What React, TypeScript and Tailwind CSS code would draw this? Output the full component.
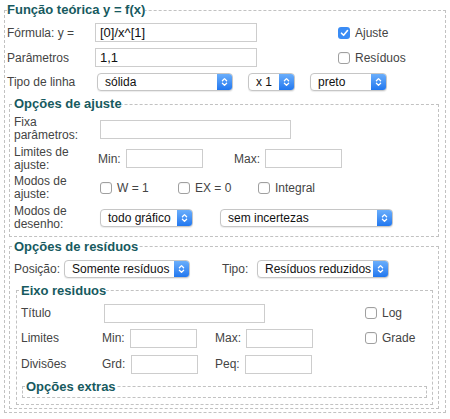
import React from "react";

const Chev = () => (
  <svg width="7" height="10" viewBox="0 0 7 10" fill="none" stroke="white" strokeWidth="1.3" strokeLinecap="round" strokeLinejoin="round">
    <path d="M1.4 3.7 L3.5 1.6 L5.6 3.7" />
    <path d="M1.4 6.3 L3.5 8.4 L5.6 6.3" />
  </svg>
);

function Select({ w, text, className = "" }: { w: string; text: string; className?: string }) {
  return (
    <div className={`${w} ${className} h-[18px] flex items-stretch rounded-[4px] border border-[#c6c6c6] bg-white shadow-[0_1px_1px_rgba(0,0,0,0.08)] overflow-hidden shrink-0`}>
      <div className="flex-1 pl-[7px] text-[12px] leading-[16px] text-[#111] whitespace-nowrap overflow-hidden">{text}</div>
      <div className="w-[15px] flex items-center justify-center bg-gradient-to-b from-[#6aaefb] to-[#2077ef]">
        <Chev />
      </div>
    </div>
  );
}

function Input({ w, value = "", className = "" }: { w: string; value?: string; className?: string }) {
  return (
    <div className={`${w} ${className} h-[19px] border border-[#cdcdcd] bg-white pl-[4px] text-[13px] leading-[17px] text-[#111] shrink-0`}>
      {value}
    </div>
  );
}

function Check({ checked = false, label, className = "" }: { checked?: boolean; label: string; className?: string }) {
  return (
    <div className={`flex items-center gap-[5px] ${className}`}>
      {checked ? (
        <div className="w-[12px] h-[12px] rounded-[3px] bg-[#3a8cf5] flex items-center justify-center shrink-0">
          <svg width="9" height="8" viewBox="0 0 9 8" fill="none" stroke="white" strokeWidth="1.6" strokeLinecap="round" strokeLinejoin="round">
            <path d="M1.5 4.2 L3.6 6.3 L7.5 1.6" />
          </svg>
        </div>
      ) : (
        <div className="w-[12px] h-[12px] rounded-[3px] border border-[#a0a0a0] bg-white shrink-0 shadow-[inset_0_1px_1px_rgba(0,0,0,0.05)]" />
      )}
      <span className="text-[12px] leading-[14px] text-[#444] whitespace-nowrap">{label}</span>
    </div>
  );
}

const legendCls = "text-[13px] leading-[16px] font-bold text-[#175a60] whitespace-nowrap";
const fsBorder = "border border-dashed border-[#c2c2c2]";

export default function App() {
  return (
    <div className="w-[450px] h-[419px] bg-white overflow-hidden font-['Liberation_Sans',Arial,sans-serif] text-[12px] text-[#444]">
      <fieldset className={`ml-[4px] mt-[2px] w-[442px] ${fsBorder} pl-[2px] pb-[3px]`}>
        <legend className={legendCls}>Função teórica y = f(x)</legend>

        <div className="mt-[5px] flex items-center h-[19px]">
          <span className="w-[88px] shrink-0">Fórmula: y =</span>
          <Input w="w-[162px]" value="[0]/x^[1]" />
          <Check checked label="Ajuste" className="ml-[81px]" />
        </div>
        <div className="mt-[6px] flex items-center h-[19px]">
          <span className="w-[88px] shrink-0">Parâmetros</span>
          <Input w="w-[162px]" value="1,1" />
          <Check label="Resíduos" className="ml-[81px]" />
        </div>
        <div className="mt-[6px] flex items-center h-[18px]">
          <span className="w-[90px] shrink-0">Tipo de linha</span>
          <Select w="w-[136px]" text="sólida" />
          <Select w="w-[47px]" text="x 1" className="ml-[15px]" />
          <Select w="w-[77px]" text="preto" className="ml-[15px]" />
        </div>

        <fieldset className={`mt-[5px] ml-[2px] w-[430px] ${fsBorder} pl-[4px] pb-[5px]`}>
          <legend className={legendCls}>Opções de ajuste</legend>
          <div className="mt-[4px] flex items-center h-[26px]">
            <span className="w-[86px] shrink-0 leading-[13px]">Fixa<br />parâmetros:</span>
            <Input w="w-[191px]" />
          </div>
          <div className="mt-[3.5px] flex items-center h-[26px]">
            <span className="w-[84px] shrink-0 leading-[13px]">Limites de<br />ajuste:</span>
            <span className="w-[28px] shrink-0">Min:</span>
            <Input w="w-[77px]" />
            <span className="ml-[31px] w-[31px] shrink-0">Max:</span>
            <Input w="w-[77px]" />
          </div>
          <div className="mt-[3.5px] flex items-center h-[26px]">
            <span className="w-[86px] shrink-0 leading-[13px]">Modos de<br />ajuste:</span>
            <Check label="W = 1" className="w-[78px]" />
            <Check label="EX = 0" className="w-[80px]" />
            <Check label="Integral" />
          </div>
          <div className="mt-[3.5px] flex items-center h-[26px]">
            <span className="w-[86px] shrink-0 leading-[13px]">Modos de<br />desenho:</span>
            <Select w="w-[93px]" text="todo gráfico" />
            <Select w="w-[173px]" text="sem incertezas" className="ml-[27px]" />
          </div>
        </fieldset>

        <fieldset className={`mt-[2px] ml-[2px] w-[430px] ${fsBorder} pl-[4px] pb-[3px]`}>
          <legend className={legendCls}>Opções de resíduos</legend>
          <div className="mt-[5px] flex items-center h-[18px]">
            <span className="w-[50px] shrink-0">Posição:</span>
            <Select w="w-[126px]" text="Somente resíduos" />
            <span className="ml-[32px] w-[35px] shrink-0">Tipo:</span>
            <Select w="w-[132px]" text="Resíduos reduzidos" />
          </div>

          <fieldset className={`mt-[5px] ml-[2px] w-[417px] ${fsBorder} pl-[4px] pb-[6px]`}>
            <legend className={legendCls}>Eixo residuos</legend>
            <div className="mt-[5px] flex items-center h-[19px]">
              <span className="w-[83px] shrink-0">Título</span>
              <Input w="w-[161px]" />
              <Check label="Log" className="ml-[100px]" />
            </div>
            <div className="mt-[6px] flex items-center h-[19px]">
              <span className="w-[81px] shrink-0">Limites</span>
              <span className="w-[28px] shrink-0">Min:</span>
              <Input w="w-[67px]" />
              <span className="ml-[18px] w-[31px] shrink-0">Max:</span>
              <Input w="w-[67px]" />
              <Check label="Grade" className="ml-[52px]" />
            </div>
            <div className="mt-[7px] flex items-center h-[19px]">
              <span className="w-[81px] shrink-0">Divisões</span>
              <span className="w-[29px] shrink-0">Grd:</span>
              <Input w="w-[67px]" />
              <span className="ml-[17px] w-[30px] shrink-0">Peq:</span>
              <Input w="w-[67px]" />
            </div>

            <fieldset className={`mt-[5px] ml-[1px] w-[405px] ${fsBorder} pl-[3px] pb-[2px]`}>
              <legend className={legendCls}>Opções extras</legend>
            </fieldset>
          </fieldset>
        </fieldset>
      </fieldset>
    </div>
  );
}
